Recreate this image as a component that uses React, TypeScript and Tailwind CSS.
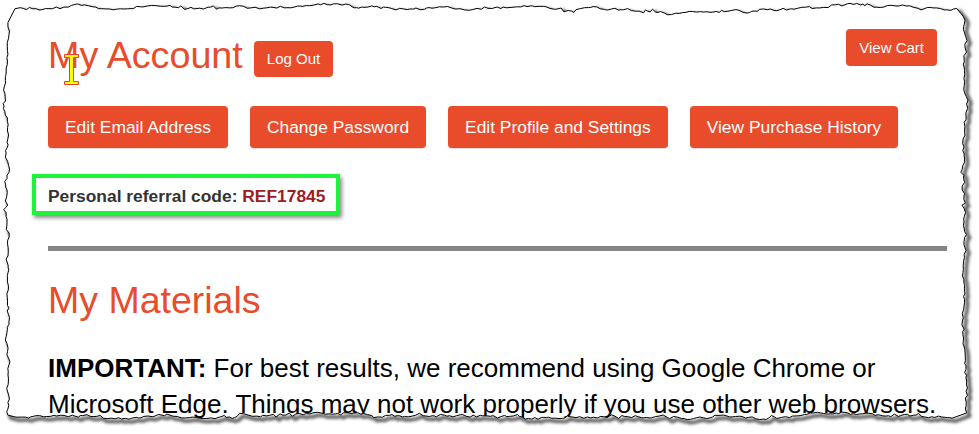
import React from "react";

function mulberry32(a: number) {
  return function () {
    a |= 0;
    a = (a + 0x6d2b79f5) | 0;
    let t = Math.imul(a ^ (a >>> 15), 1 | a);
    t = (t + Math.imul(t ^ (t >>> 7), 61 | t)) ^ t;
    return ((t ^ (t >>> 14)) >>> 0) / 4294967296;
  };
}

function buildTorn(): string {
  const r = mulberry32(1234567);
  const pts: [number, number][] = [];
  const walk = (amp: number) => {
    let l = 0;
    return () => {
      l += (r() - 0.5) * 2.4;
      l *= 0.95;
      if (l > amp) l = amp;
      if (l < -amp) l = -amp;
      let j = (r() - 0.5) * 1.8;
      if (r() < 0.1) j += (r() - 0.5) * 5;
      return l + j;
    };
  };
  // top
  let w = walk(5);
  for (let x = 15; x < 958; x += 2 + r() * 2.5) pts.push([x, 9 + w()]);
  // right
  w = walk(4.5);
  for (let y = 16; y < 414; y += 2 + r() * 2.5) pts.push([963 + w(), y]);
  // bottom
  w = walk(4.5);
  for (let x = 956; x > 12; x -= 2 + r() * 2.5) pts.push([x, 417.5 + w()]);
  // left
  w = walk(4.5);
  for (let y = 415; y > 20; y -= 2 + r() * 2.5) pts.push([8 + w(), y]);
  return "M" + pts.map((p) => p[0].toFixed(1) + " " + p[1].toFixed(1)).join(" L") + " Z";
}

const TORN = buildTorn();
const OUTSIDE = "M0 0 H979 V434 H0 Z " + TORN;

function TornEdge() {
  return (
    <svg className="pointer-events-none absolute left-0 top-0" width={979} height={434} viewBox="0 0 979 434">
      <defs>
        <clipPath id="outsideClip">
          <path d={OUTSIDE} clipRule="evenodd" />
        </clipPath>
        <filter id="blurShadow" x="-5%" y="-5%" width="110%" height="110%">
          <feGaussianBlur stdDeviation="1.6" />
        </filter>
      </defs>
      <path d={OUTSIDE} fill="#ffffff" fillRule="evenodd" />
      <g clipPath="url(#outsideClip)">
        <path
          d={TORN}
          transform="translate(3,3)"
          fill="none"
          stroke="rgba(0,0,0,0.65)"
          strokeWidth={3.5}
          filter="url(#blurShadow)"
        />
      </g>
      <path d={TORN} fill="none" stroke="#000000" strokeWidth={1} strokeLinejoin="miter" />
    </svg>
  );
}

function IBeam() {
  return (
    <svg className="pointer-events-none absolute left-[63px] top-[53px]" width={17} height={33} viewBox="0 0 17 33">
      <path
        d="M1.5 1.5 H15.5 V4.5 H10.5 V28.5 H15.5 V31.5 H1.5 V28.5 H6.5 V4.5 H1.5 Z"
        fill="#ffff00"
        stroke="#e8402a"
        strokeWidth={1}
      />
    </svg>
  );
}

const btn =
  "h-[42px] rounded-[4px] bg-[#e84c2b] px-[17px] text-[17.4px] leading-[20px] text-white shadow-[0_1px_1px_rgba(0,0,0,0.15)]";

export default function App() {
  return (
    <div className="relative h-[434px] w-[979px] overflow-hidden bg-white font-['Liberation_Sans',Arial,sans-serif]">
      <div className="pl-[48px] pr-[32px]">
        <div className="flex items-start">
          <h1 className="mt-[34px] text-[37.7px] leading-[42px] font-normal text-[#e84c2b]">My Account</h1>
          <button className="ml-[11px] mt-[41px] h-[36px] rounded-[4px] bg-[#e84c2b] px-[13px] text-[15px] leading-[18px] text-white">
            Log Out
          </button>
          <button className="ml-auto mr-[10px] mt-[29px] h-[37px] rounded-[4px] bg-[#e84c2b] px-[13px] text-[15px] leading-[18px] text-white">
            View Cart
          </button>
        </div>
        <div className="mt-[29px] flex gap-[22px]">
          <button className={btn}>Edit Email Address</button>
          <button className={btn}>Change Password</button>
          <button className={btn}>Edit Profile and Settings</button>
          <button className={btn}>View Purchase History</button>
        </div>
        <div className="relative mt-[38px] w-fit">
          <p className="text-[17.4px] font-bold leading-[20px] text-[#333333]">
            Personal referral code: <span className="text-[#9c1c1f]">REF17845</span>
          </p>
          <div className="pointer-events-none absolute left-[-16px] top-[-12px] h-[41px] w-[308px] border-[4px] border-[#1ff23c] shadow-[2px_3px_4px_rgba(0,0,0,0.45)]" />
        </div>
        <div className="mt-[40px] h-[5px] bg-[#858585]" />
        <h2 className="mt-[28px] text-[37.5px] leading-[42px] font-normal text-[#e84c2b]">My Materials</h2>
        <p className="mt-[29px] text-[26px] leading-[36px] text-black">
          <b>IMPORTANT:</b> For best results, we recommend using Google Chrome or Microsoft Edge. Things may not work
          properly if you use other web browsers.
        </p>
      </div>
      <IBeam />
      <TornEdge />
    </div>
  );
}
